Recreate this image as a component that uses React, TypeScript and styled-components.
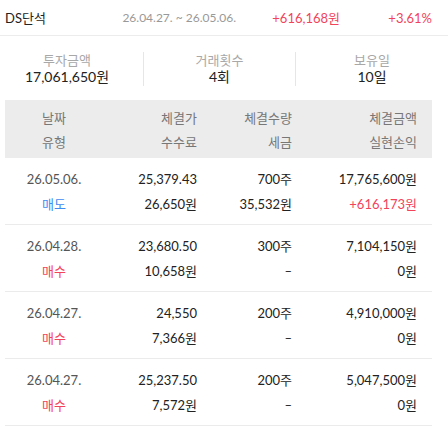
import React from "react";
import styled, { createGlobalStyle } from "styled-components";

const GlobalStyle = createGlobalStyle`
  body {
    margin: 0;
    background: #fff;
    font-family: Lato, "Noto Sans CJK KR", sans-serif;
    color: #222;
  }
`;

const Wrapper = styled.div`
  width: 448px;
`;
const TopBar = styled.div`
  display: grid;
  grid-template-columns: 1fr 130px 104px 92px;
  align-items: center;
  height: 35px;
  padding: 0 16px 0 5px;
  border-bottom: 1px solid #ececec;
  font-size: 13px;
`;
const Name = styled.div`
  color: #222;
`;
const Cell = styled.div<{ $color?: string; $small?: boolean }>`
  text-align: right;
  font-size: ${(props) => (props.$small ? "12px" : "13px")};
  color: ${(props) => props.$color || "#222"};
`;
const Summary = styled.div`
  display: grid;
  grid-template-columns: 143px 152px 1fr;
  padding: 16px 0 14px;
`;
const Stat = styled.div<{ $first?: boolean }>`
  display: flex;
  flex-direction: column;
  align-items: center;
  padding-right: ${(props) => (props.$first ? "9px" : "0")};
  border-left: ${(props) => (props.$first ? "none" : "1px solid #e6e6e6")};
`;
const StatLabel = styled.div`
  font-size: 13px;
  line-height: 16px;
  color: #a8a8a8;
`;
const StatValue = styled.div`
  font-size: 14px;
  line-height: 18px;
  color: #222;
`;
const Table = styled.div`
  margin: 0 16px 0 5px;
`;
const Row = styled.div<{ $head?: boolean }>`
  display: grid;
  grid-template-columns: 98px 94px 95px 1fr;
  grid-auto-rows: ${(props) => (props.$head ? "24px" : "25px")};
  align-items: center;
  padding: ${(props) => (props.$head ? "5px 15px 5px 0" : "8px 15px 8px 0")};
  background: ${(props) => (props.$head ? "#ececec" : "transparent")};
  border-bottom: ${(props) => (props.$head ? "none" : "1px solid #ebebeb")};
  font-size: 13px;
  color: ${(props) => (props.$head ? "#777" : "#222")};
`;
const Center = styled.div<{ $color?: string }>`
  text-align: center;
  color: ${(props) => props.$color || "inherit"};
`;
const Right = styled.div<{ $color?: string }>`
  text-align: right;
  color: ${(props) => props.$color || "inherit"};
`;

const RED = "#f2435b";
const BLUE = "#3f8cf2";

const trades = [
  { date: "26.05.06.", type: "매도", price: "25,379.43", qty: "700주", amount: "17,765,600원", fee: "26,650원", tax: "35,532원", pnl: "+616,173원" },
  { date: "26.04.28.", type: "매수", price: "23,680.50", qty: "300주", amount: "7,104,150원", fee: "10,658원", tax: "–", pnl: "0원" },
  { date: "26.04.27.", type: "매수", price: "24,550", qty: "200주", amount: "4,910,000원", fee: "7,366원", tax: "–", pnl: "0원" },
  { date: "26.04.27.", type: "매수", price: "25,237.50", qty: "200주", amount: "5,047,500원", fee: "7,572원", tax: "–", pnl: "0원" },
];

const App = () => {
  return (
    <Wrapper>
      <GlobalStyle />
      <TopBar>
        <Name>DS단석</Name>
        <Cell $small $color="#999">26.04.27. ~ 26.05.06.</Cell>
        <Cell $color={RED}>+616,168원</Cell>
        <Cell $color={RED}>+3.61%</Cell>
      </TopBar>
      <Summary>
        <Stat $first>
          <StatLabel>투자금액</StatLabel>
          <StatValue>17,061,650원</StatValue>
        </Stat>
        <Stat>
          <StatLabel>거래횟수</StatLabel>
          <StatValue>4회</StatValue>
        </Stat>
        <Stat>
          <StatLabel>보유일</StatLabel>
          <StatValue>10일</StatValue>
        </Stat>
      </Summary>
      <Table>
        <Row $head>
          <Center>날짜</Center>
          <Right>체결가</Right>
          <Right>체결수량</Right>
          <Right>체결금액</Right>
          <Center>유형</Center>
          <Right>수수료</Right>
          <Right>세금</Right>
          <Right>실현손익</Right>
        </Row>
        {trades.map((t, i) => (
          <Row key={i}>
            <Center $color="#555">{t.date}</Center>
            <Right>{t.price}</Right>
            <Right>{t.qty}</Right>
            <Right>{t.amount}</Right>
            <Center $color={t.type === "매도" ? BLUE : RED}>{t.type}</Center>
            <Right>{t.fee}</Right>
            <Right>{t.tax}</Right>
            <Right $color={t.pnl.startsWith("+") ? RED : undefined}>{t.pnl}</Right>
          </Row>
        ))}
      </Table>
    </Wrapper>
  );
};

export default App;
